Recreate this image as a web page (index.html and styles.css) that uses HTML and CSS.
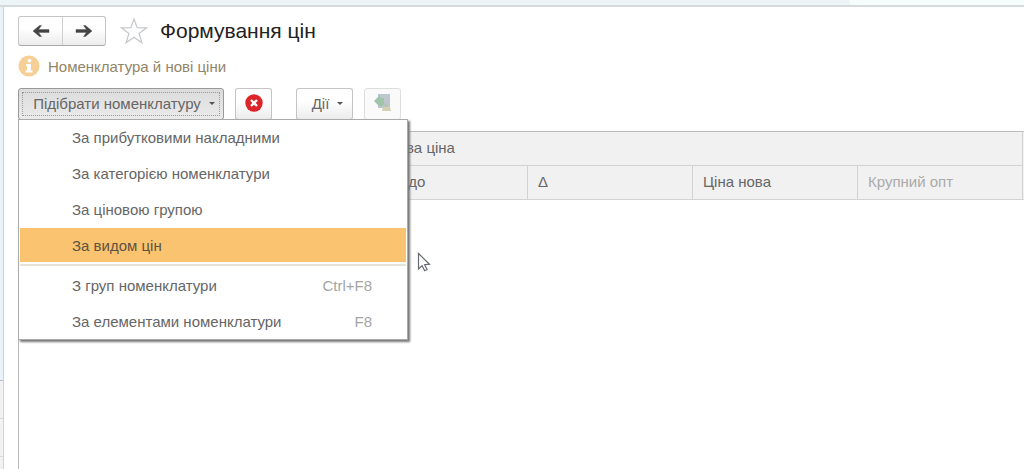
FILE: index.html
```html
<!DOCTYPE html>
<html lang="uk">
<head>
    <meta charset="UTF-8">
    <meta name="viewport" content="width=device-width, initial-scale=1.0">
    <title>Формування цін</title>
    <link rel="stylesheet" href="styles.css">
</head>
<body>

<div class="app">
    <div class="tabs"><div class="tab-active"></div></div>
    <div class="workspace">
        <div class="rail">
            <div class="rail-top"></div>
            <div class="rail-item"></div>
            <div class="rail-item"></div>
        </div>
        <main class="form">
            <div class="title-row">
                <div class="nav">
                    <button type="button" aria-label="Назад">
                        <svg width="18" height="14" viewBox="0 0 18 14"><path d="M1 7l6.5-5.5h2L6.5 5.6H17v2.8H6.5l3 4.1h-2z" fill="#444" stroke="#444" stroke-width=".4"/></svg>
                    </button>
                    <button type="button" aria-label="Вперед">
                        <svg width="18" height="14" viewBox="0 0 18 14"><path d="M17 7l-6.500-5.500h-2l3 4.100H1v2.800h10.500l-3 4.100h2z" fill="#444" stroke="#444" stroke-width=".4"/></svg>
                    </button>
                </div>
                <svg class="star" width="28" height="28" viewBox="0 0 28 28"><path d="M14 2l3.200 8.700 9.300.1-7.400 5.600 2.800 9.300L14 20.300l-7.900 5.400 2.800-9.300L1.500 10.800l9.300-.1z" fill="#fff" stroke="#c3c8cc" stroke-width="1.200"/></svg>
                <h1>Формування цін</h1>
            </div>

            <div class="info">
                <svg width="22" height="22" viewBox="0 0 22 22"><circle cx="11" cy="11" r="10.5" fill="#f6cf96"/><circle cx="11.5" cy="5.6" r="1.9" fill="#fff"/><path d="M8 9h5v6.5h1.5v2h-7v-2H9V11H8z" fill="#fff"/></svg>
                <span>Номенклатура й нові ціни</span>
            </div>

            <div class="toolbar">
                <div class="dropdown">
                    <button type="button" class="btn btn-pick" aria-expanded="true">Підібрати номенклатуру <span class="caret"></span></button>
                    <div class="menu">
                        <button type="button">За прибутковими накладними</button>
                        <button type="button">За категорією номенклатури</button>
                        <button type="button">За ціновою групою</button>
                        <button type="button" class="selected">За видом цін</button>
                        <hr>
                        <button type="button">З груп номенклатури <span class="key">Ctrl+F8</span></button>
                        <button type="button">За елементами номенклатури <span class="key">F8</span></button>
                    </div>
                </div>
                <button type="button" class="btn btn-icon" aria-label="Очистити">
                    <svg width="18" height="18" viewBox="0 0 18 18"><circle cx="9" cy="9" r="8.7" fill="#dc2429"/><path d="M6 6l6 6M12 6l-6 6" stroke="#fff" stroke-width="2.4"/></svg>
                </button>
                <button type="button" class="btn btn-actions">Дії <span class="caret"></span></button>
                <button type="button" class="btn btn-icon btn-disabled" aria-label="Завантажити" disabled>
                    <svg width="18" height="20" viewBox="0 0 18 20"><path d="M4 1h12v14H4z" fill="#bdc7ce"/><path d="M0 8l6-6v3h4v5l-1 3H6v1z" fill="#a0c3aa"/><path d="M8 18l1-4 3-1 4 1 1 4z" fill="#d3d1b2"/><circle cx="12" cy="12" r="2" fill="#b5c4ba"/></svg>
                </button>
            </div>

            <table class="prices">
                <colgroup>
                    <col class="col-name">
                    <col class="col-price">
                    <col class="col-price">
                    <col class="col-price">
                    <col class="col-price">
                    <col>
                </colgroup>
                <thead>
                    <tr>
                        <th rowspan="2"></th>
                        <th colspan="4">Базова ціна</th>
                        <th rowspan="2"></th>
                    </tr>
                    <tr>
                        <th>Ціна до</th>
                        <th>Δ</th>
                        <th>Ціна нова</th>
                        <th class="muted">Крупний опт</th>
                    </tr>
                </thead>
            </table>
            <div class="table-body"></div>
        </main>
    </div>
</div>

<svg class="cursor" width="14" height="20" viewBox="0 0 14 20"><path d="M1.5 1.5v15.5l3.6-3.3 2.6 5 2.4-1.2-2.5-4.8 4.9-.5z" fill="#fff" stroke="#666a70" stroke-width="1.2"/></svg>

</body>
</html>
```
FILE: styles.css
```css
* {
    box-sizing: border-box;
}

body {
    margin: 0;
    background: #fff;
    color: #666;
    font-family: "Liberation Sans", Arial, sans-serif;
    font-size: 15px;
}

button {
    font: inherit;
    color: inherit;
    cursor: pointer;
}

.app {
    display: flex;
    flex-direction: column;
    min-height: 100vh;
}

.tabs {
    display: flex;
    justify-content: flex-end;
    height: 7px;
    background: #edf4f8;
    border-bottom: 2px solid #d5dadb;
}

.tab-active {
    width: 17%;
    background: #f6fbfb;
}

.workspace {
    display: flex;
    flex: 1;
}

.rail {
    display: flex;
    flex-direction: column;
    width: 4px;
    background: #f1f2f1;
    border-right: 1px solid #cdd3d8;
}

.rail-top {
    height: 374px;
    background: #eaf2f9;
    border-bottom: 1px solid #b9c3cf;
}

.rail-item {
    height: 38px;
    border-bottom: 1px solid #d8dada;
}

.form {
    display: flex;
    flex-direction: column;
    flex: 1;
    padding: 9px 0 0 14px;
}

.title-row {
    display: flex;
    align-items: center;
    height: 30px;
}

.nav {
    display: flex;
    height: 30px;
    border: 1px solid #c4c4c4;
    border-bottom-color: #a8a8a8;
    border-radius: 3px;
    background: linear-gradient(#fff 40%, #ececec);
}

.nav button {
    display: flex;
    align-items: center;
    justify-content: center;
    width: 43px;
    padding: 0;
    border: none;
    background: transparent;
}

.nav button + button {
    border-left: 1px solid #d0d0d0;
}

.star {
    margin: 0 12px 0 14px;
}

h1 {
    margin: 0;
    color: #222;
    font-size: 21px;
    font-weight: normal;
}

.info {
    display: flex;
    align-items: center;
    gap: 8px;
    height: 22px;
    margin: 9px 0 11px;
    color: #938567;
}

.toolbar {
    display: flex;
    height: 32px;
}

.btn {
    display: flex;
    align-items: center;
    justify-content: center;
    height: 32px;
    padding: 0 0 2px;
    border: 1px solid #c4c4c4;
    border-bottom-color: #a8a8a8;
    border-radius: 3px;
    background: linear-gradient(#fff 40%, #ececec);
}

.btn-pick {
    gap: 8px;
    width: 206px;
    padding-left: 6px;
    border-color: #999;
    background: linear-gradient(#dcdcdc, #ebebeb);
    outline: 1px dotted #999;
    outline-offset: -5px;
}

.btn-icon {
    width: 37px;
    margin-left: 11px;
}

.btn-actions {
    gap: 8px;
    width: 57px;
    margin-left: 24px;
    padding-left: 6px;
}

.btn-disabled {
    border-color: #ddd;
    background: #fafafa;
}

.caret {
    border: 3px solid transparent;
    border-top-color: #555;
    border-bottom: none;
}

.dropdown {
    position: relative;
}

.menu {
    position: absolute;
    top: 31px;
    left: 0;
    z-index: 1;
    display: flex;
    flex-direction: column;
    gap: 2px;
    width: 390px;
    padding: 0 1px 1px;
    border: 1px solid #aaa;
    background: #fff;
    box-shadow: 2px 2px 2px #777;
}

.menu button {
    display: flex;
    align-items: center;
    justify-content: space-between;
    height: 34px;
    padding: 0 34px 0 52px;
    border: none;
    background: transparent;
}

.menu .selected {
    background: #fac370;
    color: #5e523f;
}

.menu hr {
    width: 100%;
    margin: 0;
    border: none;
    border-top: 2px solid #e6e2d8;
}

.key {
    color: #a5a5a5;
}

.prices {
    width: 100%;
    margin-top: 11px;
    border-collapse: collapse;
    table-layout: fixed;
}

.col-name {
    width: 344px;
}

.col-price {
    width: 165px;
}

.prices th {
    height: 34px;
    padding: 0 0 2px 10px;
    overflow: hidden;
    border: 1px solid #d2d2d2;
    border-top-color: #bbb;
    background: #f1f1f1;
    font-weight: normal;
    text-align: left;
    white-space: nowrap;
}

.prices tr + tr th {
    border-top-color: #d2d2d2;
}

.prices th:last-child[rowspan] {
    padding: 0;
    border-right: none;
}

.prices .muted {
    color: #aaa;
}

.table-body {
    flex: 1;
    border-left: 1px solid #bbb;
}

.cursor {
    position: absolute;
    top: 252px;
    left: 417px;
    z-index: 2;
}
```
